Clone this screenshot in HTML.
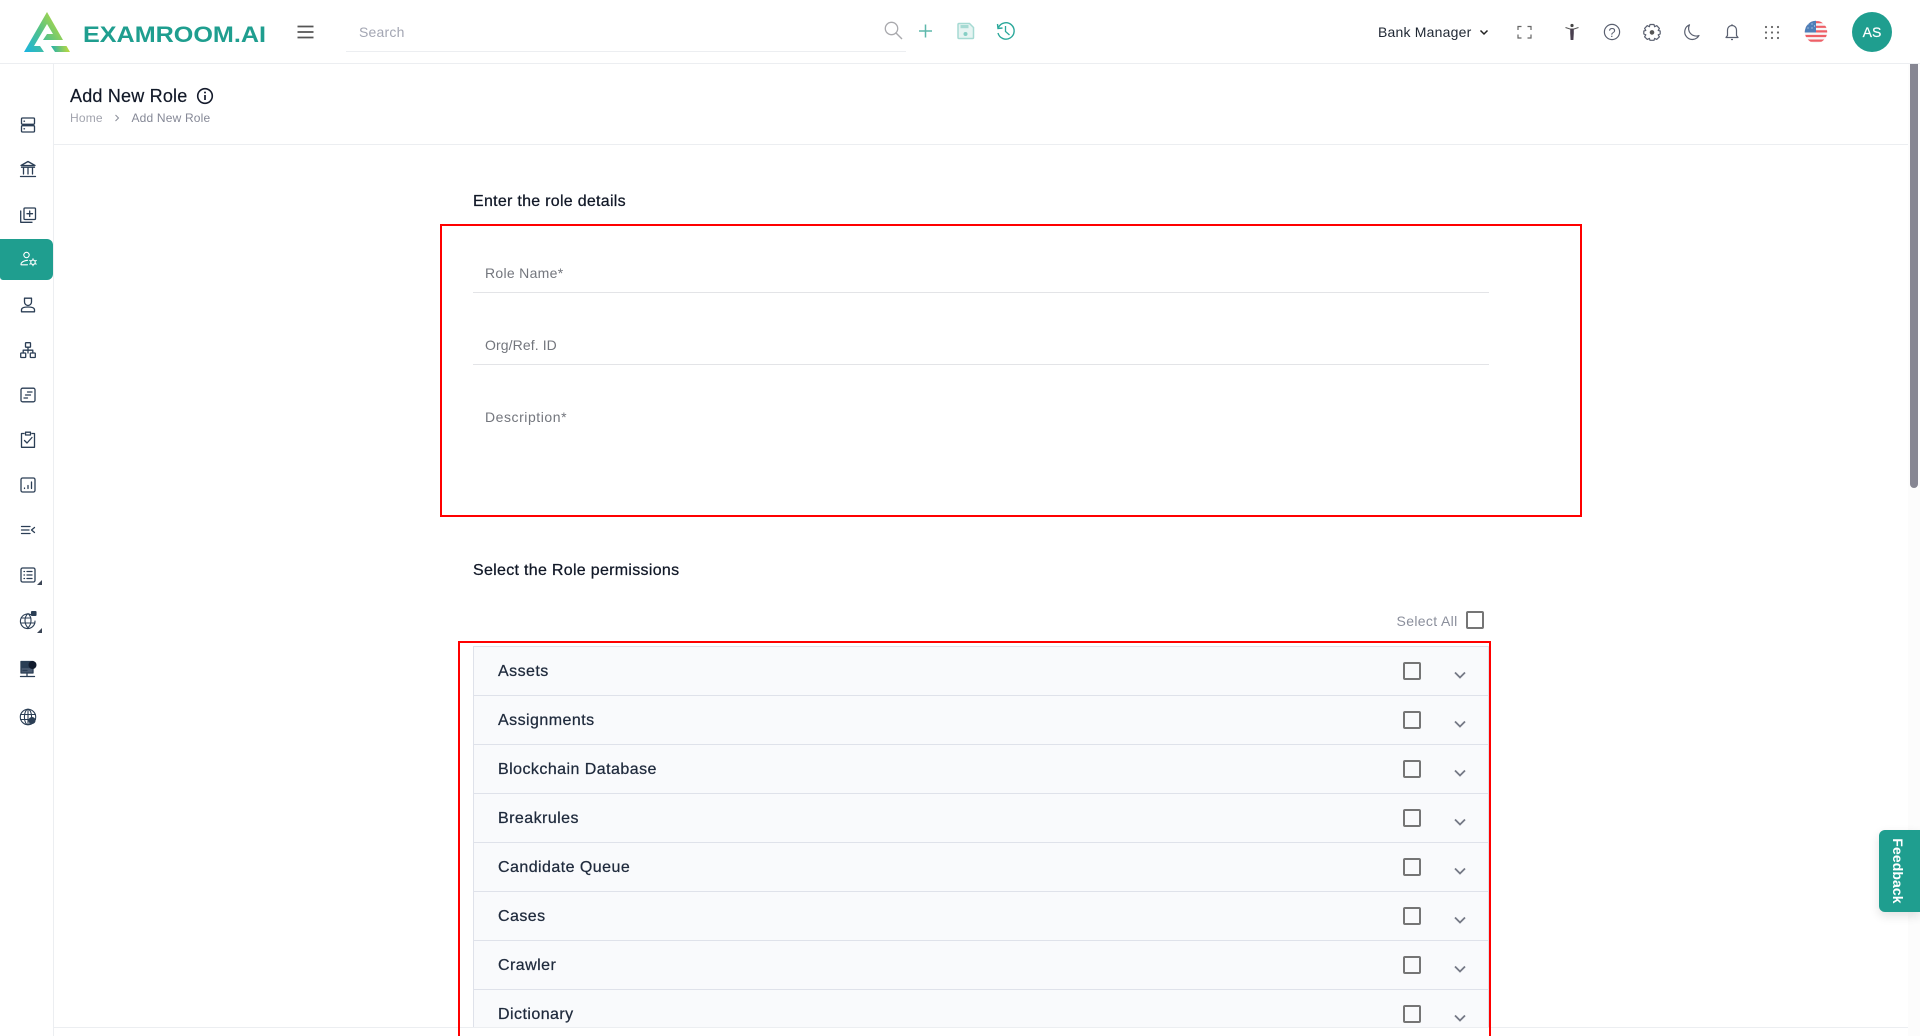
<!DOCTYPE html>
<html lang="en"><head><meta charset="utf-8"><title>Add New Role</title>
<style>
*{box-sizing:border-box}
html,body{margin:0;padding:0;width:1920px;height:1036px;overflow:hidden;background:#fff;font-family:"Liberation Sans",Arial,sans-serif;color:#111827}
.a{position:absolute}
.t{position:absolute;white-space:nowrap;line-height:20px;height:20px}
svg{position:absolute;overflow:visible}
.i{fill:none;stroke:#2b3e55;stroke-width:1.3;stroke-linecap:round;stroke-linejoin:round}
.h{fill:none;stroke:#5a6070;stroke-width:1.2;stroke-linecap:round;stroke-linejoin:round}
.cb{position:absolute;width:18px;height:18px;border:2px solid #757575;border-radius:2px;background:transparent}
.row{position:absolute;left:473px;width:1016px;height:49px;background:#f9fafc;border:1px solid #dfe2ea;border-top:0}
.row span{position:absolute;left:24px;top:16px;font-size:16px;line-height:20px;letter-spacing:.45px;color:#1f2a3c;-webkit-text-stroke:.25px #1f2a3c}
.row .cb{left:929px;top:15px}
.row svg{left:980px;top:24px}
</style></head><body>

<!-- header -->
<div class="a" style="left:0;top:63px;width:1920px;height:1px;background:#eceef1"></div>
<svg style="left:0;top:0" width="300" height="63" viewBox="0 0 300 63">
<defs>
<linearGradient id="lg" x1="24" y1="52" x2="68" y2="22" gradientUnits="userSpaceOnUse"><stop offset="0" stop-color="#18b4e4"/><stop offset=".45" stop-color="#4fc18c"/><stop offset="1" stop-color="#c9dd30"/></linearGradient>
<linearGradient id="lg2" x1="52" y1="50" x2="70" y2="48" gradientUnits="userSpaceOnUse"><stop offset="0" stop-color="#2ab3a8"/><stop offset="1" stop-color="#c5dc38"/></linearGradient>
</defs>
<path fill="url(#lg)" d="M47 12 24 52H44L40 46H34L47 24 53 34H47L43 40H63Z"/>
<path fill="url(#lg2)" d="M51 46H66.5L70 52H55Z"/>
<text x="83" y="42" font-family="Liberation Sans" font-weight="700" font-size="22" fill="#1f9e8f" textLength="183" lengthAdjust="spacingAndGlyphs">EXAMROOM.AI</text>
<path d="M297.5 26.5H313.5M297.5 32H313.5M297.5 37.5H313.5" stroke="#555" stroke-width="1.7" fill="none"/>
</svg>
<div class="t" style="left:359px;top:22px;font-size:14px;letter-spacing:.2px;color:#a3a6b3">Search</div>
<div class="a" style="left:346px;top:51px;width:560px;height:1px;background:#eceef1"></div>

<svg style="left:880px;top:16px" width="140" height="30" viewBox="880 16 140 30">
<circle cx="891.5" cy="28.5" r="6.2" fill="none" stroke="#a9a9ad" stroke-width="1.3"/><path d="M896 33 902 39" stroke="#a9a9ad" stroke-width="1.4" fill="none"/>
<path d="M919 31H932M925.5 24.5V37.5" stroke="#5fb8ac" stroke-width="1.5" fill="none"/>
<path d="M958 24.5a1 1 0 0 1 1-1H969.5L973.5 27.5V37.5a1 1 0 0 1-1 1H959a1 1 0 0 1-1-1Z" fill="#e6f4f2" stroke="#a6dad3" stroke-width="1.5"/><rect x="960.5" y="25" width="8" height="3.2" fill="#a6dad3"/><circle cx="965.5" cy="34" r="2" fill="#86cfc5"/>
<path d="M998.5 27.5A8.2 8.2 0 1 1 998 33" fill="none" stroke="#2aa89a" stroke-width="1.4"/><path d="M997.5 24 998 28.5 1002.5 28" fill="none" stroke="#2aa89a" stroke-width="1.4"/><path d="M1005.5 26V31.5L1009.5 35" fill="none" stroke="#2aa89a" stroke-width="1.3"/>
</svg>

<div class="t" style="left:1378px;top:22px;font-size:14px;letter-spacing:.2px;color:#1f2733">Bank Manager</div>
<svg style="left:1470px;top:16px" width="440" height="32" viewBox="1470 16 440 32">
<path d="M1480.5 30.5 1484 34 1487.5 30.5" fill="none" stroke="#222" stroke-width="1.5"/>
<path d="M1518 30V26.5H1521.5M1527.5 26.5H1531V30M1531 34.5V38H1527.5M1521.5 38H1518V34.5" fill="none" stroke="#666" stroke-width="1.2"/>
<circle cx="1572" cy="25.5" r="1.6" fill="#444"/><path d="M1565.5 27.5 1570 29H1574L1578.5 27.5" stroke="#555" stroke-width="1.1" fill="none"/><path d="M1570.2 29H1573.8V33L1573.4 40H1570.6L1570.2 33Z" fill="#4a4050"/>
<circle cx="1612" cy="32" r="7.6" class="h"/><text x="1612" y="36.8" text-anchor="middle" font-family="Liberation Sans" font-size="13" fill="#5a6070">?</text>
<path class="h" d="M1650 24.5H1654L1654.6 26.7 1656.7 25.6 1659.4 28.4 1658.2 30.4 1660.2 31V34L1658.2 34.8 1659.4 36.8 1656.7 39.4 1654.6 38.4 1654 40.3H1650L1649.4 38.4 1647.3 39.4 1644.6 36.8 1645.8 34.8 1643.8 34V31L1645.8 30.4 1644.6 28.4 1647.3 25.6 1649.4 26.7Z"/><circle cx="1652" cy="32.4" r="2.3" fill="#555"/>
<path class="h" d="M1689.5 24.8A7.6 7.6 0 1 0 1699 35.5 7.6 7.6 0 0 1 1689.5 24.8Z"/>
<path class="h" d="M1726 37.5H1738L1736.5 35.5V30A4.5 4.5 0 0 0 1727.5 30V35.5Z"/><path d="M1732 24.3V25.5M1731 39.5H1733" stroke="#5a6070" stroke-width="1.2" fill="none"/>
<g fill="#666"><circle cx="1766" cy="27" r="1.1"/><circle cx="1772" cy="27" r="1.1"/><circle cx="1778" cy="27" r="1.1"/><circle cx="1766" cy="32.5" r="1.1"/><circle cx="1772" cy="32.5" r="1.1"/><circle cx="1778" cy="32.5" r="1.1"/><circle cx="1766" cy="38" r="1.1"/><circle cx="1772" cy="38" r="1.1"/><circle cx="1778" cy="38" r="1.1"/></g>
<defs><clipPath id="fc"><circle cx="1816" cy="32" r="11.2"/></clipPath></defs>
<g clip-path="url(#fc)"><rect x="1804" y="20" width="24" height="24" fill="#f7f7f8"/><path d="M1804 22.2H1828M1804 26.8H1828M1804 31.4H1828M1804 36H1828M1804 40.6H1828" stroke="#ee5f66" stroke-width="2.2"/><rect x="1804" y="20" width="12" height="12.5" fill="#4f7fb8"/><g fill="#cfe0f2"><circle cx="1808" cy="24" r=".6"/><circle cx="1812" cy="24" r=".6"/><circle cx="1808" cy="28" r=".6"/><circle cx="1812" cy="28" r=".6"/><circle cx="1814.5" cy="26" r=".6"/></g></g>
</svg>
<div class="a" style="left:1852px;top:12px;width:40px;height:40px;border-radius:50%;background:#1f9e8f;color:#fff;font-size:14px;line-height:40px;text-align:center;-webkit-text-stroke:.2px #fff">AS</div>

<!-- sidebar -->
<div class="a" style="left:53px;top:64px;width:1px;height:972px;background:#eceef1"></div>
<div class="a" style="left:0;top:239px;width:53px;height:41px;background:#1f9e8f;border-radius:0 6px 6px 3px"></div>

<svg style="left:18px;top:115px" width="20" height="20" viewBox="0 0 20 20" class="i"><rect x="3.5" y="3" width="13" height="6.3" rx="1"/><rect x="3.5" y="10.7" width="13" height="6.3" rx="1"/><path d="M6 6.2H6.5M6 13.8H6.5"/></svg>
<svg style="left:18px;top:159px" width="20" height="20" viewBox="0 0 20 20" class="i"><path d="M10 2.5 17 6.5H3ZM2.5 17.5H17.5M3.5 8.2H16.5M5.5 9V15M10 9V15M14.5 9V15"/></svg>
<svg style="left:18px;top:205px" width="20" height="20" viewBox="0 0 20 20" class="i"><rect x="6" y="3" width="11.5" height="11.5" rx="1"/><path d="M11.7 6V11.5M9 8.7H14.5M2.7 6V17.3H14"/></svg>
<svg style="left:18px;top:249px;stroke:#fff" width="20" height="20" viewBox="0 0 20 20" class="i"><g stroke="#fff" stroke-width="1.1"><circle cx="8.5" cy="6" r="2.7"/><path d="M3 15.5C3 12.8 6 11.8 9.5 11.3M3 15.8H9.5"/><circle cx="15" cy="13.3" r="2.2"/><path d="M15 9.8V10.8M15 15.8V16.8M11.8 11.5 12.8 12M17.2 14.6 18.2 15.1M11.8 15.1 12.8 14.6M17.2 12 18.2 11.5"/></g></svg>
<svg style="left:18px;top:295px" width="20" height="20" viewBox="0 0 20 20" class="i"><path d="M6.5 3.2H13.5V7A3.5 3.5 0 0 1 6.5 7ZM3.5 16.8V14.8C3.5 12.8 6 12 10 12S16.5 12.8 16.5 14.8V16.8Z"/></svg>
<svg style="left:18px;top:340px" width="20" height="20" viewBox="0 0 20 20" class="i"><rect x="7.5" y="2.7" width="5" height="4.5" rx=".6"/><rect x="2.7" y="13" width="5" height="4.5" rx=".6"/><rect x="12.3" y="13" width="5" height="4.5" rx=".6"/><path d="M10 7.2V13M5.2 13V10.2H14.8V13"/></svg>
<svg style="left:18px;top:385px" width="20" height="20" viewBox="0 0 20 20" class="i"><rect x="3" y="3.2" width="14" height="13.6" rx="1.6"/><path d="M9.5 7H14M7.5 10H12.5M6 13H9.5"/></svg>
<svg style="left:18px;top:430px" width="20" height="20" viewBox="0 0 20 20" class="i" stroke-width="1.1"><path d="M6 3.5H3.5V17.3H16.5V3.5H14M7.5 2.2H12.5V5H7.5ZM6.5 10.5 9 13 14 7.5"/></svg>
<svg style="left:18px;top:475px" width="20" height="20" viewBox="0 0 20 20" class="i"><rect x="3" y="3" width="14" height="14" rx="1.6"/><path d="M6.5 13.5V13M10 13.5V10.5M13.5 13.5V7"/></svg>
<svg style="left:18px;top:520px" width="20" height="20" viewBox="0 0 20 20" style="stroke-width:1.1;left:18px;top:520px" class="i"><path d="M3.5 6.5H12M3.5 10H11M3.5 13.5H12M16.5 7.5 13.5 10 16.5 12.5"/></svg>
<svg style="left:18px;top:565px" width="20" height="20" viewBox="0 0 20 20" class="i"><rect x="3" y="3" width="14" height="14" rx="1.6"/><path d="M6 6.5H6.5M9 6.5H14M6 10H6.5M9 10H14M6 13.5H6.5M9 13.5H14"/></svg>
<svg style="left:18px;top:610px;stroke-width:1.1" width="20" height="20" viewBox="0 0 20 20" class="i"><path d="M13.5 5A7.3 7.3 0 1 0 17 11M3 8H13M3 13H17M10 3.5C6 7 6 14 10 17.8M10 3.5C14 7 14 14 10 17.8"/><rect x="13.5" y="1.5" width="4.5" height="4" rx=".5" fill="#2b3e55"/></svg>
<svg style="left:18px;top:659px" width="20" height="20" viewBox="0 0 20 20" class="i"><rect x="3" y="2.5" width="12" height="5.5" fill="#2b3e55"/><rect x="3" y="8.5" width="12" height="5.5" fill="#4a5a70"/><circle cx="14.5" cy="6" r="4" fill="#111b2d" stroke="none"/><path d="M5 11.5H9M9 14V17M2.5 17.5H16.5" /></svg>
<svg style="left:18px;top:707px;stroke-width:1.1" width="20" height="20" viewBox="0 0 20 20" class="i"><circle cx="10" cy="10" r="7.7"/><ellipse cx="10" cy="10" rx="3.6" ry="7.7"/><path d="M2.5 7.5H17.5M2.5 12.5H17.5M10 2.3V17.7"/><circle cx="14" cy="13.5" r="3" fill="#2b3e55"/></svg>
<svg style="left:0;top:0" width="60" height="660"><path d="M42 580V585H37Z" fill="#3c4656"/><path d="M42 628V633H37Z" fill="#3c4656"/></svg>

<!-- title -->
<div class="t" style="left:70px;top:86px;font-size:18px;letter-spacing:.2px;color:#111827;-webkit-text-stroke:.2px #111827">Add New Role</div>
<svg style="left:196px;top:87px" width="18" height="18" viewBox="0 0 18 18"><circle cx="9" cy="9" r="7.3" fill="none" stroke="#151b2c" stroke-width="1.6"/><path d="M9 8V13" stroke="#151b2c" stroke-width="1.7"/><circle cx="9" cy="5.5" r="1" fill="#151b2c"/></svg>
<div class="t" style="left:70px;top:108px;font-size:12px;letter-spacing:.2px;color:#a1a3ad">Home</div>
<svg style="left:113px;top:114px" width="8" height="8" viewBox="0 0 8 8"><path d="M2.5 1 5.5 4 2.5 7" fill="none" stroke="#8a8d98" stroke-width="1"/></svg>
<div class="t" style="left:131.5px;top:108px;font-size:12px;letter-spacing:.18px;color:#858896">Add New Role</div>
<div class="a" style="left:54px;top:144px;width:1854px;height:1px;background:#eceef1"></div>

<!-- form -->
<div class="t" style="left:473px;top:192px;font-size:16px;letter-spacing:.28px;color:#111827;-webkit-text-stroke:.25px #111827">Enter the role details</div>
<div class="t" style="left:485px;top:263px;font-size:14px;letter-spacing:.3px;color:#73767d">Role Name*</div>
<div class="a" style="left:473px;top:292px;width:1016px;height:1px;background:#e3e4e7"></div>
<div class="t" style="left:485px;top:335px;font-size:14px;letter-spacing:.1px;color:#73767d">Org/Ref. ID</div>
<div class="a" style="left:473px;top:364px;width:1016px;height:1px;background:#e3e4e7"></div>
<div class="t" style="left:485px;top:407px;font-size:14px;letter-spacing:.55px;color:#73767d">Description*</div>
<div class="a" style="left:440px;top:224px;width:1142px;height:293px;border:2px solid #ff0000"></div>

<div class="t" style="left:473px;top:561px;font-size:16px;letter-spacing:.3px;color:#111827;-webkit-text-stroke:.25px #111827">Select the Role permissions</div>
<div class="t" style="left:1396.5px;top:611px;font-size:14px;letter-spacing:.35px;color:#8b8f9c">Select All</div>
<div class="cb" style="left:1466px;top:611px"></div>

<!-- accordion -->
<div class="a" style="left:0;top:0;width:1920px;height:1027px;overflow:hidden">
<div class="a" style="left:473px;top:646px;width:1016px;height:1px;background:#dfe2ea"></div>
<div class="row" style="top:647px;height:49px;border-radius:0"><span style="top:15px">Assets</span><div class="cb" style="top:15px"></div><svg width="12" height="8" viewBox="0 0 12 8"><path d="M1 1.5 6 6.5 11 1.5" fill="none" stroke="#747885" stroke-width="1.8"/></svg></div>
<div class="row" style="top:696px"><span style="top:15px">Assignments</span><div class="cb"></div><svg width="12" height="8" viewBox="0 0 12 8"><path d="M1 1.5 6 6.5 11 1.5" fill="none" stroke="#747885" stroke-width="1.8"/></svg></div>
<div class="row" style="top:745px"><span style="top:15px">Blockchain Database</span><div class="cb"></div><svg width="12" height="8" viewBox="0 0 12 8"><path d="M1 1.5 6 6.5 11 1.5" fill="none" stroke="#747885" stroke-width="1.8"/></svg></div>
<div class="row" style="top:794px"><span style="top:15px">Breakrules</span><div class="cb"></div><svg width="12" height="8" viewBox="0 0 12 8"><path d="M1 1.5 6 6.5 11 1.5" fill="none" stroke="#747885" stroke-width="1.8"/></svg></div>
<div class="row" style="top:843px"><span style="top:15px">Candidate Queue</span><div class="cb"></div><svg width="12" height="8" viewBox="0 0 12 8"><path d="M1 1.5 6 6.5 11 1.5" fill="none" stroke="#747885" stroke-width="1.8"/></svg></div>
<div class="row" style="top:892px"><span style="top:15px">Cases</span><div class="cb"></div><svg width="12" height="8" viewBox="0 0 12 8"><path d="M1 1.5 6 6.5 11 1.5" fill="none" stroke="#747885" stroke-width="1.8"/></svg></div>
<div class="row" style="top:941px"><span style="top:15px">Crawler</span><div class="cb"></div><svg width="12" height="8" viewBox="0 0 12 8"><path d="M1 1.5 6 6.5 11 1.5" fill="none" stroke="#747885" stroke-width="1.8"/></svg></div>
<div class="row" style="top:990px"><span style="top:15px">Dictionary</span><div class="cb"></div><svg width="12" height="8" viewBox="0 0 12 8"><path d="M1 1.5 6 6.5 11 1.5" fill="none" stroke="#747885" stroke-width="1.8"/></svg></div>
</div>
<div class="a" style="left:54px;top:1027px;width:1854px;height:1px;background:#eceef1"></div>
<div class="a" style="left:458px;top:641px;width:2px;height:395px;background:#ff0000"></div>
<div class="a" style="left:458px;top:641px;width:1033px;height:2px;background:#ff0000"></div>
<div class="a" style="left:1489px;top:641px;width:2px;height:395px;background:#ff0000"></div>

<!-- scrollbar -->
<div class="a" style="left:1908px;top:64px;width:12px;height:972px;background:#fcfcfc"></div>
<div class="a" style="left:1910px;top:64px;width:8px;height:424px;background:#868692;border-radius:0 0 4px 4px"></div>

<!-- feedback -->
<div class="a" style="left:1879px;top:830px;width:41px;height:82px;background:#1f9e8f;border-radius:6px 0 0 6px;box-shadow:0 4px 10px rgba(0,0,0,.12)"></div>
<div class="t" style="left:1865px;top:861px;width:66px;font-size:14px;font-weight:700;color:#fff;text-align:center;transform:rotate(90deg);letter-spacing:.1px">Feedback</div>
</body></html>
